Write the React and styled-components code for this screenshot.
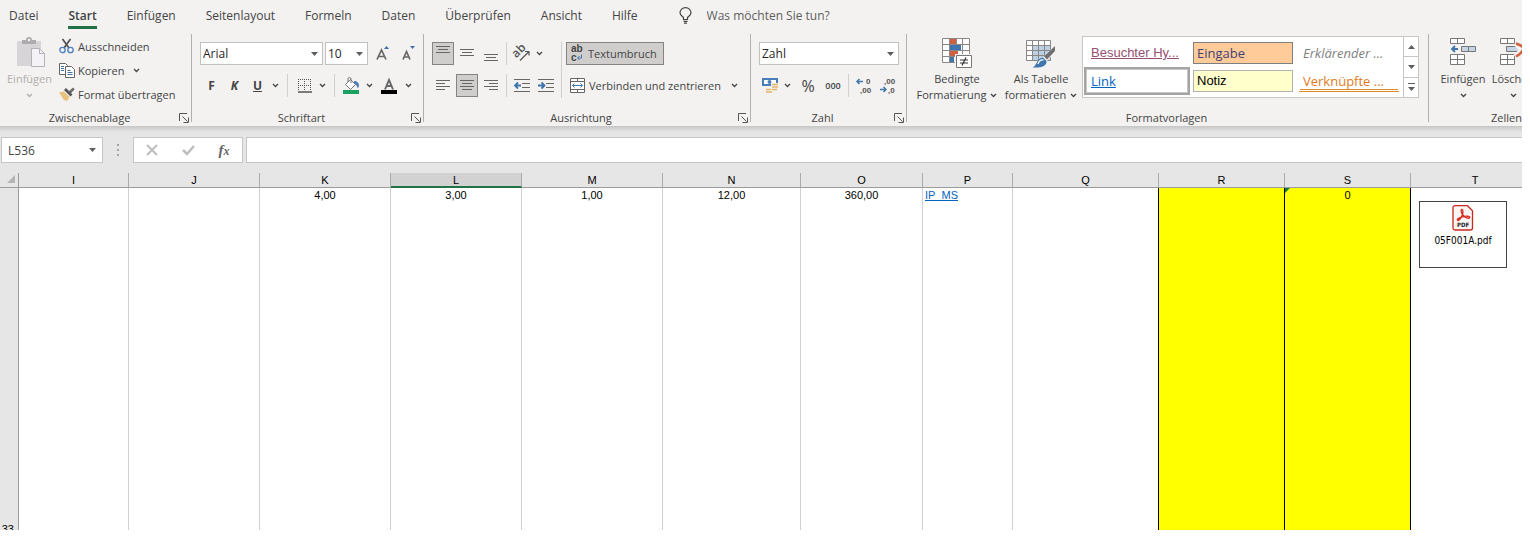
import React, { useState } from "react";
import styled, { createGlobalStyle, css } from "styled-components";

const uiFont = `"Open Sans", "Noto Sans", sans-serif`;
const cellFont = `"Liberation Sans", Arial, sans-serif`;

const GlobalStyle = createGlobalStyle`
  * {
    box-sizing: border-box;
  }

  body {
    margin: 0;
    background: #fff;
    color: #444;
    font-family: ${uiFont};
    font-size: 12px;
  }

  button,
  input,
  select {
    font: inherit;
    color: inherit;
    margin: 0;
    padding: 0;
    border: 0;
    border-radius: 0;
    background: transparent;
  }

  svg {
    flex: none;
    overflow: visible;
  }
`;

const Window = styled.div`
  display: flex;
  flex-direction: column;
  height: calc(100vh - 6px);
  margin-right: 8px;
  overflow: hidden;
  background: #e6e6e6;
`;

const TabBar = styled.nav`
  display: flex;
  align-items: center;
  flex: none;
  gap: 30px;
  height: 34px;
  padding: 0 9px 3px;
  background: #f3f2f1;
  white-space: nowrap;
`;

const Tab = styled.button`
  height: 26px;
  border-top: 3px solid transparent;
  border-bottom: 3px solid ${(p) => (p.$active ? "#217346" : "transparent")};
  font-weight: ${(p) => (p.$active ? 600 : 400)};
  line-height: 20px;
`;

const TellMe = styled.label`
  display: flex;
  align-items: center;
  flex: 1;
  gap: 15px;
  margin-left: 11px;

  input {
    flex: 1;
    outline: 0;
  }

  input::placeholder {
    color: #605e5c;
    opacity: 1;
  }
`;

const Ribbon = styled.div`
  display: flex;
  flex: none;
  overflow: hidden;
  background: #f3f2f1;
  font-size: 11px;
  white-space: nowrap;
`;

const Group = styled.section`
  position: relative;
  display: flex;
  flex-direction: column;
  flex: 0 0 ${(p) => p.$width}px;

  &::after {
    content: "";
    position: absolute;
    top: 0;
    right: 0;
    bottom: 4px;
    width: 1px;
    background: #b3b0ad;
  }
`;

const GroupBody = styled.div`
  display: flex;
  align-items: flex-start;
  height: 76px;
  padding-left: ${(p) => p.$left || 8}px;
`;

const GroupFooter = styled.div`
  display: flex;
  align-items: center;
  height: 16px;
  padding-right: 3px;
`;

const GroupTitle = styled.span`
  flex: 1;
  line-height: 16px;
  text-align: center;
`;

const Launcher = styled.button`
  width: 10px;
  height: 10px;

  svg {
    display: block;
  }
`;

const BigButton = styled.button`
  display: flex;
  flex-direction: column;
  align-items: center;
  width: ${(p) => p.$width}px;
  padding-top: 3px;
  line-height: 16px;
  color: ${(p) => (p.disabled ? "#b1afad" : "#444")};

  > svg {
    margin-bottom: 2px;
  }
`;

const BigLine = styled.span`
  display: flex;
  align-items: center;
  gap: 4px;
  height: 16px;
`;

const SmallStack = styled.div`
  display: flex;
  flex-direction: column;
  align-items: flex-start;
  padding-left: 5px;
`;

const SmallButton = styled.button`
  display: flex;
  align-items: center;
  gap: 3px;
  height: 24px;

  svg + span + svg {
    margin-left: 6px;
  }
`;

const Rows = styled.div`
  display: flex;
  flex-direction: column;
  gap: 9px;
  padding-top: 8px;
`;

const Row = styled.div`
  display: flex;
  align-items: center;
  gap: ${(p) => p.$gap || 0}px;
  height: 23px;
`;

const Divider = styled.span`
  align-self: stretch;
  width: 1px;
  margin: 0 ${(p) => p.$space || 5}px;
  background: #d2d0ce;
`;

const TallDivider = styled(Divider)`
  align-self: auto;
  height: 56px;
  margin-top: 8px;
`;

const ToolButton = styled.button`
  display: flex;
  align-items: center;
  justify-content: center;
  flex: none;
  width: ${(p) => p.$width || 22}px;
  height: 23px;
  font-size: 12px;
  font-weight: 700;

  ${(p) =>
    p.$pressed &&
    css`
      background: #cfcecd;
      border: 1px solid #868482;
    `}
`;

const PercentButton = styled(ToolButton)`
  font-size: 16px;
  font-weight: 400;
`;

const ThousandsButton = styled(ToolButton)`
  font-size: 9px;
  font-weight: 600;
`;

const LabelButton = styled.button`
  display: flex;
  align-items: center;
  gap: 4px;
  height: 23px;
  padding: 0 6px 0 3px;
  border: 1px solid ${(p) => (p.$pressed ? "#868482" : "transparent")};
  background: ${(p) => (p.$pressed ? "#cfcecd" : "transparent")};

  svg + span + svg {
    margin-left: 6px;
  }
`;

const SelectBox = styled.div`
  position: relative;
  width: ${(p) => p.$width}px;
  height: 23px;
  border: 1px solid #c3c1bf;
  background: #fff;
  color: #262626;
  font-size: 12px;

  select {
    width: 100%;
    height: 100%;
    padding-left: 2px;
    appearance: none;
    outline: 0;
  }

  svg {
    position: absolute;
    top: 9px;
    right: 4px;
    pointer-events: none;
  }
`;

const Gallery = styled.div`
  display: flex;
  height: 62px;
  margin: 2px 0 0 1px;
  border: 1px solid #c8c6c4;
  background: #fff;
`;

const StyleGrid = styled.div`
  display: grid;
  grid-template-columns: repeat(3, 106px);
  grid-auto-rows: 28px;
  padding: 2px 1px;
`;

const StyleItem = styled.button`
  padding: ${(p) => (p.$selected ? 1 : 3)}px;
  border: ${(p) => (p.$selected ? "2px solid #a6a4a2" : "0")};
  outline: ${(p) => (p.$selected ? "1px solid #c8c6c4" : "0")};
  outline-offset: -3px;
`;

const StylePreview = styled.span`
  display: block;
  height: 22px;
  padding-left: 3px;
  border: 1px solid transparent;
  font-size: 13px;
  line-height: 20px;
  text-align: left;
  ${(p) => p.$look}
`;

const GalleryScroll = styled.div`
  display: flex;
  flex-direction: column;
  width: 15px;
  border-left: 1px solid #c8c6c4;

  button {
    display: flex;
    align-items: center;
    justify-content: center;
    flex: 1;
  }

  button + button {
    border-top: 1px solid #c8c6c4;
  }
`;

const FormulaBar = styled.div`
  display: flex;
  flex: none;
  height: 47px;
  padding: 11px 0 10px 1px;
  background: linear-gradient(#c6c6c6, #e6e6e6 6px);
`;

const NameBox = styled.div`
  display: flex;
  align-items: center;
  width: 102px;
  border: 1px solid #c6c6c6;
  background: #fff;

  input {
    flex: 1;
    min-width: 0;
    padding-left: 6px;
    outline: 0;
  }

  button {
    display: flex;
    align-items: center;
    justify-content: center;
    width: 20px;
    height: 22px;
  }
`;

const Grip = styled.span`
  display: flex;
  align-items: center;
  justify-content: center;
  width: 30px;
`;

const FormulaTools = styled.div`
  display: flex;
  align-items: center;
  width: 110px;
  border: 1px solid #c6c6c6;
  background: #fff;

  button {
    flex: 1;
    height: 24px;
  }
`;

const FxButton = styled.button`
  && {
    font-family: "Liberation Serif", serif;
    font-size: 15px;
    font-style: italic;
    font-weight: 700;
    line-height: 20px;
    color: #666;
  }

  small {
    font-size: 12px;
  }
`;

const FormulaInput = styled.input`
  && {
    flex: 1;
    margin-left: 3px;
    padding: 0 6px;
    border: 1px solid #c6c6c6;
    border-right: 0;
    background: #fff;
    outline: 0;
  }
`;

const Sheet = styled.div`
  flex: 1;
  min-height: 0;
  overflow: hidden;
  background: #fff;
`;

const Grid = styled.table`
  width: 1540px;
  table-layout: fixed;
  border-collapse: separate;
  border-spacing: 0;
  font-family: ${cellFont};
  font-size: 11px;
  line-height: 13px;
  color: #000;
`;

const Corner = styled.td`
  height: 15px;
  padding: 0 3px 2px 0;
  border-right: 1px solid #9b9b9b;
  border-bottom: 1px solid #9b9b9b;
  background: #e6e6e6;
  text-align: right;

  svg {
    display: block;
    margin-left: auto;
  }
`;

const ColumnHead = styled.th`
  height: 15px;
  padding: 1px 0 0;
  border-right: 1px solid #ababab;
  border-bottom: ${(p) =>
    p.$active ? "2px solid #217346" : "1px solid #9b9b9b"};
  background: ${(p) => (p.$active ? "#d2d2d2" : "#e6e6e6")};
  font-weight: 400;
  line-height: ${(p) => (p.$active ? 12 : 13)}px;
`;

const RowHead = styled.th`
  height: 348px;
  padding: 0 4px 0 0;
  border-right: 1px solid #9b9b9b;
  background: #e6e6e6;
  font-weight: 400;
  text-align: right;
  vertical-align: bottom;
`;

const Cell = styled.td`
  position: relative;
  padding: 1px 2px 0;
  border-right: 1px solid ${(p) => (p.$dark ? "#000" : "#d0d0d0")};
  background: ${(p) => (p.$fill ? "#ffff00" : "#fff")};
  text-align: ${(p) => p.$align || "center"};
  vertical-align: top;

  a {
    color: #0563c1;
  }
`;

const ErrorMark = styled.span`
  position: absolute;
  top: 0;
  left: 0;
  border-top: 5px solid #107c41;
  border-right: 5px solid transparent;
`;

const PdfObject = styled.div`
  display: flex;
  flex-direction: column;
  align-items: center;
  gap: 3px;
  width: 88px;
  height: 67px;
  margin: 12px 0 0 6px;
  padding-top: 3px;
  border: 1px solid #444;
  font-family: "DejaVu Sans Condensed", "DejaVu Sans", sans-serif;
  font-size: 10px;
`;

const Chevron = () => (
  <svg width="7" height="5" viewBox="0 0 7 5" fill="none">
    <path d="M1 1l2.5 2.5L6 1" stroke="currentColor" strokeWidth="1.3" />
  </svg>
);

const Arrow = ({ up }) => (
  <svg width="7" height="4" viewBox="0 0 7 4">
    <path d={up ? "M0 4h7L3.5 0z" : "M0 0h7L3.5 4z"} fill="#605e5c" />
  </svg>
);

const LauncherIcon = () => (
  <svg width="10" height="10" viewBox="0 0 10 10" fill="none" stroke="#555">
    <path d="M.5 8V.5H8M3.5 3.5l5 5M9.5 4.5v5h-5" />
  </svg>
);

const BulbIcon = () => (
  <svg width="13" height="17" viewBox="0 0 13 17" fill="none" stroke="#444">
    <path
      d="M4.5 12.500v-2C3 9 1 8 1 5.800a5.500 5.200 0 0 1 11 0C12 8 10 9 8.500 10.500v2zM4.500 14.300h4M5 16.200h3"
      strokeWidth="1.2"
    />
  </svg>
);

const PasteIcon = () => (
  <svg width="30" height="32" viewBox="0 0 30 32">
    <path d="M2 4h24v25H2z" fill="#d8d5d8" />
    <path d="M7 7V3h4a3 3 0 0 1 6 0h4v4z" fill="#adabad" />
    <circle cx="14" cy="3" r="1.3" fill="#f3f2f1" />
    <path d="M16.500 11.500h8l5 5v13h-13z" fill="#f5f2f7" stroke="#b5b2b5" />
    <path d="M24.500 11.500v5h5" fill="none" stroke="#b5b2b5" />
  </svg>
);

const ScissorsIcon = () => (
  <svg width="16" height="16" viewBox="0 0 16 16" fill="none">
    <path d="M3.500 1l6.500 9M11.500 1L5 10" stroke="#555" strokeWidth="1.800" />
    <circle cx="3.500" cy="12" r="2.700" stroke="#4a7ebb" strokeWidth="1.300" />
    <circle cx="11.500" cy="12" r="2.700" stroke="#4a7ebb" strokeWidth="1.300" />
  </svg>
);

const CopyIcon = () => (
  <svg width="16" height="15" viewBox="0 0 16 15" fill="#fff" stroke="#666">
    <path d="M.5.5h6l2 2v9h-8z" />
    <path d="M6.500 3.500h6l3 3v8h-9z" />
    <path
      d="M2 3.500h3M2 5.500h3M2 7.500h3M8.500 7.500h3M8.500 9.500h5M8.500 11.500h5"
      stroke="#41719c"
    />
  </svg>
);

const BrushIcon = () => (
  <svg width="16" height="15" viewBox="0 0 16 15">
    <path d="M0 5.500l5-1 5.500 5.500L8 14l-3-1z" fill="#e8c27e" />
    <path d="M5 3l2-2 6.500 6.500-2 2z" fill="#555" />
    <path d="M9.500 4.500L14 .5l1.700 1.700-4 4.300z" fill="#6b6b6b" />
  </svg>
);

const GrowFontIcon = ({ small }) => (
  <svg width="14" height="16" viewBox="0 0 14 16" fill="none">
    <path
      d={
        small
          ? "M1 13.500L4.500 5.500l3.500 8M2.300 11h4.400"
          : "M1 13.500L5.500 4 10 13.500M2.800 10.500h5.400"
      }
      stroke="#666"
      strokeWidth="1.700"
    />
    <path d={small ? "M8 0h5l-2.500 3z" : "M8 3h5l-2.500-3z"} fill="#3f6fa8" />
  </svg>
);

const BordersIcon = () => (
  <svg width="14" height="14" viewBox="0 0 14 14" fill="none" stroke="#555">
    <path
      d="M0 .5h14M0 6.500h14M.5 0v12M6.500 0v12M12.500 0v12"
      strokeDasharray="1 1"
    />
    <path d="M0 13h14" strokeWidth="1.500" />
  </svg>
);

const BucketIcon = () => (
  <svg width="17" height="17" viewBox="0 0 17 17">
    <path d="M2.500 7.500l5-5 5 5-5 5z" fill="#fff" stroke="#777" />
    <path d="M5 5V2a1.500 1.500 0 0 1 3 0v4" fill="none" stroke="#777" />
    <path
      d="M11 4c3 0 5 2 5 4.500 0 1.500-.6 2.500-1.300 2.500-1-2-1.200-4-3.700-5z"
      fill="#4a7ebb"
    />
    <path d="M0 13h16v4H0z" fill="#1aa260" />
  </svg>
);

const FontColorIcon = () => (
  <svg width="16" height="17" viewBox="0 0 16 17" fill="none">
    <path d="M4 12.500L8 3l4 9.500M5.500 9h5" stroke="#666" strokeWidth="1.900" />
    <path d="M0 13h16v4H0z" fill="#000" />
  </svg>
);

const lineSets = {
  top: "M1 1.500h14M3 4.500h10M1 7.500h14",
  middle: "M1 4.500h14M3 7.500h10M1 10.500h14",
  bottom: "M1 9.500h14M3 12.500h10M1 15.500h14",
  left: "M1 3.500h14M1 6.500h9M1 9.500h14M1 12.500h9",
  center: "M1 3.500h14M3 6.500h10M1 9.500h14M3 12.500h10",
  right: "M1 3.500h14M6 6.500h9M1 9.500h14M6 12.500h9",
};

const LinesIcon = ({ kind }) => (
  <svg width="16" height="17" viewBox="0 0 16 17" fill="none" stroke="#666">
    <path d={lineSets[kind]} />
  </svg>
);

const IndentIcon = ({ more }) => (
  <svg width="16" height="13" viewBox="0 0 16 13" fill="none">
    <path d="M0 .5h16M8 4.500h8M8 8.500h8M0 12.500h16" stroke="#666" />
    <path
      d={more ? "M0 6.500h6M3.500 3.500l3 3-3 3" : "M1 6.500h6M4 3.500l-3 3 3 3"}
      stroke="#3f76ae"
      strokeWidth="1.800"
    />
  </svg>
);

const OrientationIcon = () => (
  <svg width="18" height="17" viewBox="0 0 18 17" fill="none">
    <text
      x="1"
      y="12"
      transform="rotate(-45 4 10)"
      fontSize="12"
      fontWeight="600"
      fill="#555"
    >
      ab
    </text>
    <path d="M7 15.500L16 6.500M12 6.500h4v4" stroke="#555" strokeWidth="1.200" />
  </svg>
);

const WrapIcon = () => (
  <svg
    width="14"
    height="17"
    viewBox="0 0 14 17"
    fill="none"
    fontFamily="Liberation Sans"
    fontWeight="700"
  >
    <text x="1" y="7" fontSize="10" fill="#444">
      ab
    </text>
    <text x="1" y="16" fontSize="10" fill="#444">
      c
    </text>
    <path d="M11.500 9.500v3.500H8M9.500 11L7.500 13l2 2" stroke="#3f76ae" />
  </svg>
);

const MergeIcon = () => (
  <svg width="15" height="15" viewBox="0 0 15 15" fill="#fff" stroke="#666">
    <path d="M.5.5h14v14H.5zM.5 3.500h14M.5 11.500h14M7.500.5v3M7.500 11.500v3" />
    <path
      d="M2.500 7.500h10M4.500 5.500l-2 2 2 2M10.500 5.500l2 2-2 2"
      fill="none"
      stroke="#3f76ae"
    />
  </svg>
);

const CurrencyIcon = () => (
  <svg width="18" height="17" viewBox="0 0 18 17">
    <path d="M2 2h14v6H2z" fill="#fff" stroke="#4a7ebb" strokeWidth="2" />
    <circle cx="8.500" cy="5" r="2" fill="#4a7ebb" />
    <path d="M10 6h8v6h-5v4H4v-5h6z" fill="#f3f2f1" />
    <path
      d="M11 7.500h6M11 10h6M5 12.500h5M11 12.500h5M5 15h6"
      stroke="#e3b66a"
      strokeWidth="1.700"
    />
  </svg>
);

const DecimalIcon = ({ less }) => (
  <svg width="16" height="17" viewBox="0 0 16 17" fill="none">
    <g fontSize="8" fontFamily="Liberation Sans" fontWeight="700" fill="#555">
      <text x={less ? 4 : 10} y="7">
        {less ? ",00" : "0"}
      </text>
      <text x={less ? 8 : 4} y="16">
        {less ? ",0" : ",00"}
      </text>
    </g>
    <path
      d={
        less
          ? "M0 12.500h6M3.500 10l2.500 2.500L3.500 15"
          : "M1 4.500h6M3.500 2L1 4.500 3.500 7"
      }
      stroke="#3f76ae"
      strokeWidth="1.500"
    />
  </svg>
);

const ConditionalIcon = () => (
  <svg width="30" height="32" viewBox="0 0 30 32">
    <path d="M.5 1.500h27v24H.5z" fill="#fff" />
    <path d="M8 2h6v5H8zM8 14h8v5H8z" fill="#d0603f" />
    <path d="M8 8h11v5H8zM8 20h4v5H8z" fill="#3f76ae" />
    <path
      d="M.5 1.500h27v24H.5zM.5 7.500h27M.5 13.500h27M.5 19.500h27M7.500 1.500v24M14.500 1.500v6M20.500 1.500v18"
      fill="none"
      stroke="#8a8886"
    />
    <path d="M13 17h17v14H13z" fill="#f3f2f1" />
    <path d="M14.500 18.500h15v12h-15z" fill="#fff" stroke="#777" />
    <path d="M18 23h8M18 26h8M24 20.500l-4 8" stroke="#333" strokeWidth="1.200" />
  </svg>
);

const TableFormatIcon = () => (
  <svg width="30" height="32" viewBox="0 0 30 32">
    <path d="M.5 3.500h24v20H.5z" fill="#fff" />
    <path d="M7 9h17v14H7z" fill="#bcd0e4" />
    <path
      d="M.5 3.500h24v20H.5zM.5 8.500h24M.5 13.500h24M.5 18.500h24M6.500 3.500v20M12.500 3.500v20M18.500 3.500v20"
      fill="none"
      stroke="#8a8886"
    />
    <path d="M29.500 8v7L18 27l-4-3.500z" fill="#f3f2f1" />
    <path d="M29 9v5l-8 8.500-3-3z" fill="#707070" />
    <path
      d="M17 20.500l3.500 3.500c.5 5-5 7-14 6.500 4-1 3.500-8.500 10.500-10z"
      fill="#3f76ae"
    />
    <path
      d="M12 27c1-3 3-4.500 5.500-4"
      fill="none"
      stroke="#fff"
      strokeWidth="1.300"
    />
  </svg>
);

const CellsIcon = ({ remove }) => (
  <svg width="30" height="32" viewBox="0 0 30 32">
    <path
      d="M2.500 1.500h14v5h-14zM9.500 1.500v5M2.500 17.500h14v10h-14zM2.500 22.500h14M9.500 17.500v10"
      fill="#fff"
      stroke="#777"
    />
    {remove ? (
      <>
        <path d="M8.500 9.500h14v5h-14z" fill="#c5d5e4" stroke="#777" />
        <path
          d="M17 6.500l12 13M29 6.500l-12 13"
          stroke="#f3f2f1"
          strokeWidth="4"
        />
        <path
          d="M18 6.500q9 3 7 6.500t-7 6.500M30 6.500l-5 6.500 5 6.500"
          fill="none"
          stroke="#d0603f"
          strokeWidth="2.500"
        />
      </>
    ) : (
      <>
        <path
          d="M13.500 9.500h14v5h-14zM20.500 9.500v5"
          fill="#c5d5e4"
          stroke="#777"
        />
        <path
          d="M4 12h6M7 9l-3 3 3 3"
          fill="none"
          stroke="#3f76ae"
          strokeWidth="1.800"
        />
      </>
    )}
  </svg>
);

const PdfIcon = () => (
  <svg width="22" height="26" viewBox="0 0 22 26" fill="none">
    <path
      d="M3 .7h12.500l5 5V23a2 2 0 0 1-2 2H3a2 2 0 0 1-2-2V3A2 2 0 0 1 3 .7z"
      fill="#fbf6f4"
      stroke="#c8281e"
      strokeWidth="1.300"
    />
    <path
      d="M10 4.500c-1.500 0-1 3 1 5.500 2 2.700 6 4.300 6.700 2.500.6-1.500-4.200-1.600-7.200-.7-3.500 1-6 2.700-5 3.500 1.200 1 3.500-2 4.700-5 1-2.600 1.100-5.800-.2-5.800z"
      stroke="#d62b1f"
      strokeWidth="1.300"
    />
    <text x="5" y="22" fontSize="6" fontWeight="700" fill="#222">
      PDF
    </text>
  </svg>
);

const ChevronButton = ({ label }) => (
  <ToolButton $width={13} aria-label={label}>
    <Chevron />
  </ToolButton>
);

const Dropdown = ({ label, width, options }) => (
  <SelectBox $width={width}>
    <select aria-label={label}>
      {options.map((option) => (
        <option key={option}>{option}</option>
      ))}
    </select>
    <Arrow />
  </SelectBox>
);

const RibbonGroup = ({ title, width, left, launcher = true, children }) => (
  <Group $width={width} aria-label={title}>
    <GroupBody $left={left}>{children}</GroupBody>
    <GroupFooter>
      <GroupTitle>{title}</GroupTitle>
      {launcher && (
        <Launcher aria-label={`${title} Optionen`}>
          <LauncherIcon />
        </Launcher>
      )}
    </GroupFooter>
  </Group>
);

const tabs = [
  "Datei",
  "Start",
  "Einfügen",
  "Seitenlayout",
  "Formeln",
  "Daten",
  "Überprüfen",
  "Ansicht",
  "Hilfe",
];

const cellStyles = [
  {
    name: "Besuchter Hy...",
    look: `color: #954f72; text-decoration: underline; font-family: ${cellFont};`,
  },
  {
    name: "Eingabe",
    look: "color: #3f3f76; background: #ffcc99; border-color: #7f7f7f;",
  },
  { name: "Erklärender ...", look: "color: #7f7f7f; font-style: italic;" },
  {
    name: "Link",
    look: "color: #0563c1; text-decoration: underline;",
    selected: true,
  },
  {
    name: "Notiz",
    look: `color: #000; background: #ffffcc; border-color: #b2b2b2; font-family: ${cellFont};`,
  },
  {
    name: "Verknüpfte ...",
    look: "color: #e07b1a; border-bottom: 3px double #e08a2c;",
  },
];

const columns = [
  { name: "I", width: 110 },
  { name: "J", width: 131 },
  { name: "K", width: 131, value: "4,00" },
  { name: "L", width: 131, value: "3,00" },
  { name: "M", width: 141, value: "1,00" },
  { name: "N", width: 138, value: "12,00" },
  { name: "O", width: 122, value: "360,00" },
  { name: "P", width: 90, link: "IP_MS" },
  { name: "Q", width: 146, dark: true },
  { name: "R", width: 126, fill: true, dark: true },
  { name: "S", width: 126, fill: true, dark: true, value: "0", error: true },
  { name: "T", width: 129, file: "05F001A.pdf" },
];

const App = () => {
  const [activeTab, setActiveTab] = useState("Start");
  const [address, setAddress] = useState("L536");
  const [formula, setFormula] = useState("");

  return (
    <>
      <GlobalStyle />
      <Window>
        <TabBar>
          {tabs.map((tab) => (
            <Tab
              key={tab}
              $active={tab === activeTab}
              onClick={() => setActiveTab(tab)}
            >
              {tab}
            </Tab>
          ))}
          <TellMe>
            <BulbIcon />
            <input type="text" placeholder="Was möchten Sie tun?" />
          </TellMe>
        </TabBar>

        <Ribbon>
          <RibbonGroup title="Zwischenablage" width={192} left={5}>
            <BigButton $width={49} disabled>
              <PasteIcon />
              <BigLine>Einfügen</BigLine>
              <BigLine>
                <Chevron />
              </BigLine>
            </BigButton>
            <SmallStack>
              <SmallButton>
                <ScissorsIcon />
                <span>Ausschneiden</span>
              </SmallButton>
              <SmallButton>
                <CopyIcon />
                <span>Kopieren</span>
                <Chevron />
              </SmallButton>
              <SmallButton>
                <BrushIcon />
                <span>Format übertragen</span>
              </SmallButton>
            </SmallStack>
          </RibbonGroup>

          <RibbonGroup title="Schriftart" width={232}>
            <Rows>
              <Row $gap={2}>
                <Dropdown
                  label="Schriftart"
                  width={123}
                  options={["Arial", "Calibri", "Verdana"]}
                />
                <Dropdown
                  label="Schriftgrad"
                  width={43}
                  options={["10", "11", "12", "14"]}
                />
                <ToolButton $width={26} aria-label="Schriftgrad vergrößern">
                  <GrowFontIcon />
                </ToolButton>
                <ToolButton aria-label="Schriftgrad verkleinern">
                  <GrowFontIcon small />
                </ToolButton>
              </Row>
              <Row>
                <ToolButton $width={23}>F</ToolButton>
                <ToolButton $width={23}>
                  <i>K</i>
                </ToolButton>
                <ToolButton $width={23}>
                  <u>U</u>
                </ToolButton>
                <ChevronButton label="Unterstreichungsart" />
                <Divider />
                <ToolButton $width={23} aria-label="Rahmen">
                  <BordersIcon />
                </ToolButton>
                <ChevronButton label="Rahmenart" />
                <Divider />
                <ToolButton $width={23} aria-label="Füllfarbe">
                  <BucketIcon />
                </ToolButton>
                <ChevronButton label="Füllfarben" />
                <ToolButton $width={26} aria-label="Schriftfarbe">
                  <FontColorIcon />
                </ToolButton>
                <ChevronButton label="Schriftfarben" />
              </Row>
            </Rows>
          </RibbonGroup>

          <RibbonGroup title="Ausrichtung" width={327}>
            <Rows>
              <Row>
                <Row $gap={2}>
                  <ToolButton $pressed aria-label="Oben ausrichten">
                    <LinesIcon kind="top" />
                  </ToolButton>
                  <ToolButton aria-label="Zentriert ausrichten">
                    <LinesIcon kind="middle" />
                  </ToolButton>
                  <ToolButton aria-label="Unten ausrichten">
                    <LinesIcon kind="bottom" />
                  </ToolButton>
                </Row>
                <Divider $space={4} />
                <ToolButton aria-label="Ausrichtung">
                  <OrientationIcon />
                </ToolButton>
                <ChevronButton label="Ausrichtungen" />
              </Row>
              <Row>
                <Row $gap={2}>
                  <ToolButton aria-label="Linksbündig">
                    <LinesIcon kind="left" />
                  </ToolButton>
                  <ToolButton $pressed aria-label="Zentriert">
                    <LinesIcon kind="center" />
                  </ToolButton>
                  <ToolButton aria-label="Rechtsbündig">
                    <LinesIcon kind="right" />
                  </ToolButton>
                </Row>
                <Divider $space={4} />
                <Row $gap={2}>
                  <ToolButton aria-label="Einzug verkleinern">
                    <IndentIcon />
                  </ToolButton>
                  <ToolButton aria-label="Einzug vergrößern">
                    <IndentIcon more />
                  </ToolButton>
                </Row>
              </Row>
            </Rows>
            <TallDivider $space={4} />
            <Rows>
              <Row>
                <LabelButton $pressed>
                  <WrapIcon />
                  <span>Textumbruch</span>
                </LabelButton>
              </Row>
              <Row>
                <LabelButton>
                  <MergeIcon />
                  <span>Verbinden und zentrieren</span>
                  <Chevron />
                </LabelButton>
              </Row>
            </Rows>
          </RibbonGroup>

          <RibbonGroup title="Zahl" width={156}>
            <Rows>
              <Row>
                <Dropdown
                  label="Zahlenformat"
                  width={140}
                  options={["Zahl", "Standard", "Währung"]}
                />
              </Row>
              <Row>
                <ToolButton aria-label="Buchhaltungszahlenformat">
                  <CurrencyIcon />
                </ToolButton>
                <ChevronButton label="Währungen" />
                <PercentButton $width={28}>%</PercentButton>
                <ThousandsButton>000</ThousandsButton>
                <Divider $space={4} />
                <Row $gap={2}>
                  <ToolButton aria-label="Dezimalstelle hinzufügen">
                    <DecimalIcon />
                  </ToolButton>
                  <ToolButton aria-label="Dezimalstelle löschen">
                    <DecimalIcon less />
                  </ToolButton>
                </Row>
              </Row>
            </Rows>
          </RibbonGroup>

          <RibbonGroup
            title="Formatvorlagen"
            width={522}
            left={6}
            launcher={false}
          >
            <BigButton $width={88}>
              <ConditionalIcon />
              <BigLine>Bedingte</BigLine>
              <BigLine>
                Formatierung <Chevron />
              </BigLine>
            </BigButton>
            <BigButton $width={80}>
              <TableFormatIcon />
              <BigLine>Als Tabelle</BigLine>
              <BigLine>
                formatieren <Chevron />
              </BigLine>
            </BigButton>
            <Gallery>
              <StyleGrid>
                {cellStyles.map((item) => (
                  <StyleItem key={item.name} $selected={item.selected}>
                    <StylePreview $look={item.look}>{item.name}</StylePreview>
                  </StyleItem>
                ))}
              </StyleGrid>
              <GalleryScroll>
                <button aria-label="Vorherige Zeile">
                  <Arrow up />
                </button>
                <button aria-label="Nächste Zeile">
                  <Arrow />
                </button>
                <button aria-label="Weitere">
                  <svg width="7" height="8" viewBox="0 0 7 8" fill="#605e5c">
                    <path d="M0 0h7v1H0zM0 4h7L3.500 8z" />
                  </svg>
                </button>
              </GalleryScroll>
            </Gallery>
          </RibbonGroup>

          <RibbonGroup title="Zellen" width={158} launcher={false}>
            <BigButton $width={52}>
              <CellsIcon />
              <BigLine>Einfügen</BigLine>
              <BigLine>
                <Chevron />
              </BigLine>
            </BigButton>
            <BigButton $width={48}>
              <CellsIcon remove />
              <BigLine>Löschen</BigLine>
              <BigLine>
                <Chevron />
              </BigLine>
            </BigButton>
          </RibbonGroup>
        </Ribbon>

        <FormulaBar>
          <NameBox>
            <input
              type="text"
              aria-label="Namenfeld"
              value={address}
              onChange={(e) => setAddress(e.target.value)}
            />
            <button aria-label="Namen anzeigen">
              <Arrow />
            </button>
          </NameBox>
          <Grip>
            <svg width="2" height="12" viewBox="0 0 2 12" fill="#a6a6a6">
              <path d="M0 0h2v2H0zM0 5h2v2H0zM0 10h2v2H0z" />
            </svg>
          </Grip>
          <FormulaTools>
            <button aria-label="Abbrechen">
              <svg width="12" height="10" viewBox="0 0 12 10" fill="none">
                <path d="M1 0l10 10M11 0L1 10" stroke="#bdbdbd" strokeWidth="2" />
              </svg>
            </button>
            <button aria-label="Eingeben">
              <svg width="13" height="10" viewBox="0 0 13 10" fill="none">
                <path d="M1 5l4 4 7-8" stroke="#bdbdbd" strokeWidth="2.500" />
              </svg>
            </button>
            <FxButton aria-label="Funktion einfügen">
              f<small>x</small>
            </FxButton>
          </FormulaTools>
          <FormulaInput
            type="text"
            aria-label="Bearbeitungsleiste"
            value={formula}
            onChange={(e) => setFormula(e.target.value)}
          />
        </FormulaBar>

        <Sheet>
          <Grid>
            <colgroup>
              <col width={19} />
              {columns.map((col) => (
                <col key={col.name} width={col.width} />
              ))}
            </colgroup>
            <thead>
              <tr>
                <Corner>
                  <svg width="8" height="8" viewBox="0 0 8 8">
                    <path d="M8 0v8H0z" fill="#b4b4b4" />
                  </svg>
                </Corner>
                {columns.map((col) => (
                  <ColumnHead
                    key={col.name}
                    scope="col"
                    $active={address.startsWith(col.name)}
                  >
                    {col.name}
                  </ColumnHead>
                ))}
              </tr>
            </thead>
            <tbody>
              <tr>
                <RowHead scope="row">33</RowHead>
                {columns.map((col) => (
                  <Cell
                    key={col.name}
                    $fill={col.fill}
                    $dark={col.dark}
                    $align={col.link || col.file ? "left" : "center"}
                  >
                    {col.error && <ErrorMark />}
                    {col.value}
                    {col.link && <a href="#ip-ms">{col.link}</a>}
                    {col.file && (
                      <PdfObject>
                        <PdfIcon />
                        {col.file}
                      </PdfObject>
                    )}
                  </Cell>
                ))}
              </tr>
            </tbody>
          </Grid>
        </Sheet>
      </Window>
    </>
  );
};

export default App;
